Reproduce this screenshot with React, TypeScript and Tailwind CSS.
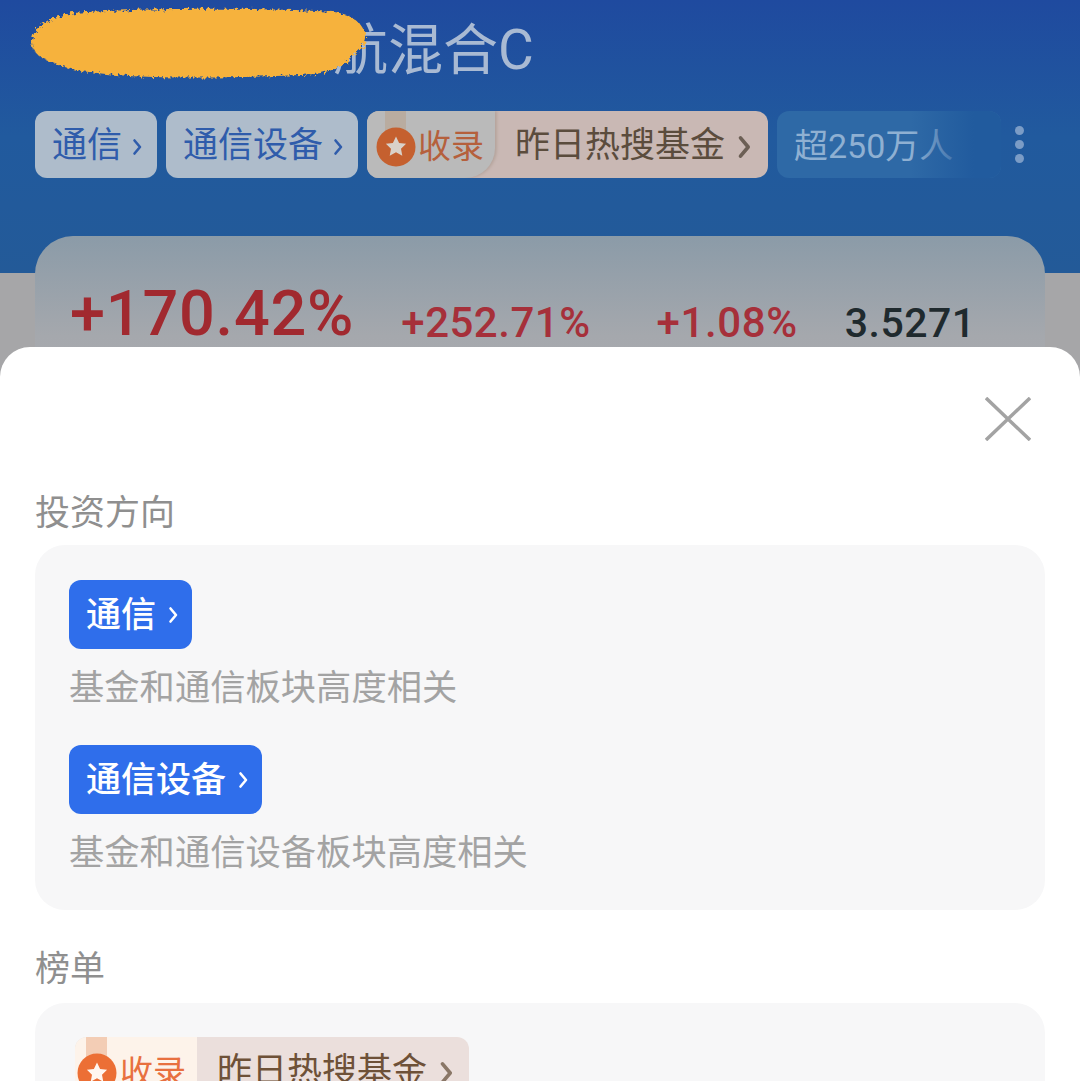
import React from 'react';

const cjk = 'font-["Roboto","Noto_Sans_CJK_SC",sans-serif]';

function Arrow({ className }: { className: string }) {
  return (
    <svg viewBox="0 0 10 20" className={className} fill="none" stroke="currentColor" strokeWidth="2.6" strokeLinecap="round" strokeLinejoin="round">
      <path d="M2.500 3.500l5.500 6.500-5.500 6.500" />
    </svg>
  );
}

function Medal({ ribbon, disc, star }: { ribbon: string; disc: string; star: string }) {
  return (
    <svg viewBox="0 0 40 58" className="w-10 h-[58px] shrink-0">
      <path d="M9 0h21v20H9z" className={ribbon} />
      <circle cx="20" cy="36" r="19.5" className={disc} />
      <path d="M20 25.500l3.100 6.400 7 .9-5.100 4.900 1.300 7-6.300-3.400-6.300 3.400 1.300-7-5.100-4.900 7-.9z" className={star} />
    </svg>
  );
}

function TopChip({ label, width }: { label: string; width: string }) {
  return (
    <div className={`${width} h-[67px] shrink-0 rounded-xl bg-[#aebccb] flex items-center pl-[17px] gap-[10px] text-[#2f5cab] text-[35px]`}>
      <span className="pt-1">{label}</span>
      <Arrow className="w-[10px] h-5 mt-1" />
    </div>
  );
}

function BlueChip({ label, width }: { label: string; width: string }) {
  return (
    <div className={`${width} h-[69px] rounded-xl bg-[#2f6eeb] flex items-center pl-[17px] gap-3 text-white text-[35px] font-medium`}>
      <span className="pt-1">{label}</span>
      <Arrow className="w-[10px] h-5" />
    </div>
  );
}

export default function App() {
  return (
    <div className={`relative w-[1080px] h-[1081px] overflow-hidden bg-[#a6a6a8] ${cjk}`}>
      <header className="h-[273px] bg-[linear-gradient(180deg,#1f4a9f_0%,#215a9e_50%,#235a98_100%)] px-[35px]">
        <div className="h-[111px] flex items-start pl-[298px] pt-[14px] text-[55px] leading-[72px] text-[#a9bad3]">
          航混合C
        </div>
        <div className="flex items-center gap-[9px]">
          <TopChip label="通信" width="w-[122px]" />
          <TopChip label="通信设备" width="w-[192px]" />
          <div className="w-[401px] h-[67px] shrink-0 rounded-xl overflow-hidden flex bg-[#c9b8b4]">
            <div className="relative w-[128px] rounded-br-[30px] bg-[#bababa] shadow-[2px_0_3px_#b5a49c] flex items-start pl-[9px] overflow-hidden">
              <Medal ribbon="fill-[#b9aca0]" disc="fill-[#c5602f]" star="fill-[#d9d1c9]" />
              <span className="ml-[2px] pt-[2px] text-[33px] leading-[67px] text-[#b5603c]">收录</span>
            </div>
            <div className="flex-1 flex items-center pl-5 gap-3 text-[35px] text-[#5b4c3d]">
              <span className="pt-1">昨日热搜基金</span>
              <Arrow className="w-[14px] h-7 mt-1 text-[#6c5f55]" />
            </div>
          </div>
          <div className="relative w-[224px] h-[67px] shrink-0 rounded-xl overflow-hidden bg-[#2e69a6] flex items-center pl-[17px] text-[34px] text-[#8fb0d2]">
            <span className="pt-1">超250万人</span>
            <div className="absolute inset-y-0 right-0 w-[90px] bg-[linear-gradient(90deg,#215b9e00_0%,#215b9e_70%)]" />
          </div>
          <div className="flex flex-col gap-[5px] ml-[5px]">
            <span className="w-[9px] h-[9px] rounded-full bg-[#7b9cc6]" />
            <span className="w-[9px] h-[9px] rounded-full bg-[#7b9cc6]" />
            <span className="w-[9px] h-[9px] rounded-full bg-[#7b9cc6]" />
          </div>
        </div>
      </header>

      <div className="mx-[35px] -mt-[37px] h-[200px] rounded-t-[38px] bg-[linear-gradient(180deg,#8b9ba8_0%,#a5a8ad_50%,#adadb0_100%)] pl-[35px] pt-[38px] flex items-baseline">
        <span className="text-[63px] leading-[80px] font-medium tracking-[0.8px] text-[#a1292f]">+170.42%</span>
        <span className="ml-[47px] translate-y-[2px] text-[42px] font-medium tracking-[0.5px] text-[#a6303a]">+252.71%</span>
        <span className="ml-[66px] translate-y-[2px] text-[42px] font-medium tracking-[0.6px] text-[#a6303a]">+1.08%</span>
        <span className="ml-[47px] translate-y-[2px] text-[41px] font-medium tracking-[0.5px] text-[#1f2a2e]">3.5271</span>
      </div>

      {/* bottom sheet */}
      <div className="absolute left-0 right-0 top-[347px] bottom-0 bg-white rounded-t-[30px] px-[35px]">
        <div className="h-[132px] flex justify-end pt-[50px] pr-[14px]">
          <svg viewBox="0 0 46 44" className="w-[46px] h-[44px]" fill="none" stroke="#a3a3a3" strokeWidth="3.5">
            <path d="M1 1l44 42M45 1L1 43" />
          </svg>
        </div>
        <div className="text-[35px] leading-[70px] text-[#8f8f8f] h-[66px]">投资方向</div>
        <section className="h-[365px] rounded-[30px] bg-[#f7f7f8] pl-[34px] pt-[35px]">
          <BlueChip label="通信" width="w-[123px]" />
          <p className="mt-[14px] h-[82px] text-[35.3px] leading-[50px] text-[#a3a3a3]">基金和通信板块高度相关</p>
          <BlueChip label="通信设备" width="w-[193px]" />
          <p className="mt-[14px] text-[35.3px] leading-[50px] text-[#a3a3a3]">基金和通信设备板块高度相关</p>
        </section>
        <div className="mt-[24px] h-[69px] text-[35px] leading-[72px] text-[#8f8f8f]">榜单</div>
        <section className="h-[200px] rounded-[30px] bg-[#f7f7f8] pl-[40px] pt-[34px]">
          <div className="w-[394px] h-[67px] rounded-xl overflow-hidden flex bg-[#ebdfdc]">
            <div className="w-[122px] bg-[#fdf3ea] flex items-start pl-[2px] overflow-hidden">
              <Medal ribbon="fill-[#f3cdb5]" disc="fill-[#ec6f35]" star="fill-[#fff6ef]" />
              <span className="ml-[3px] pt-[2px] text-[33px] leading-[67px] text-[#e8703f]">收录</span>
            </div>
            <div className="flex-1 flex items-center pl-5 gap-3 text-[35px] text-[#6e5138]">
              <span className="pt-1">昨日热搜基金</span>
              <Arrow className="w-[14px] h-7 mt-1 text-[#8a7767]" />
            </div>
          </div>
        </section>
      </div>

      {/* redaction scribble */}
      <svg viewBox="0 0 346 78" className="absolute left-[25px] top-[4px] w-[350px] h-[78px]">
        <filter id="rough" x="-5%" y="-10%" width="110%" height="120%">
          <feTurbulence type="fractalNoise" baseFrequency="0.3" numOctaves="3" seed="4" />
          <feDisplacementMap in="SourceGraphic" scale="7" />
        </filter>
        <path
          d="M5 38C5 22 24 12 47 9c60-5 190-6 260-1 18 2 31 13 32 24 1 8-6 15-15 21-4 7-16 14-36 17-60 4-150 5-200 1-25-3-45-4-60-12C12 54 5 48 5 38z"
          fill="#f6b23e"
          filter="url(#rough)"
        />
      </svg>
    </div>
  );
}
